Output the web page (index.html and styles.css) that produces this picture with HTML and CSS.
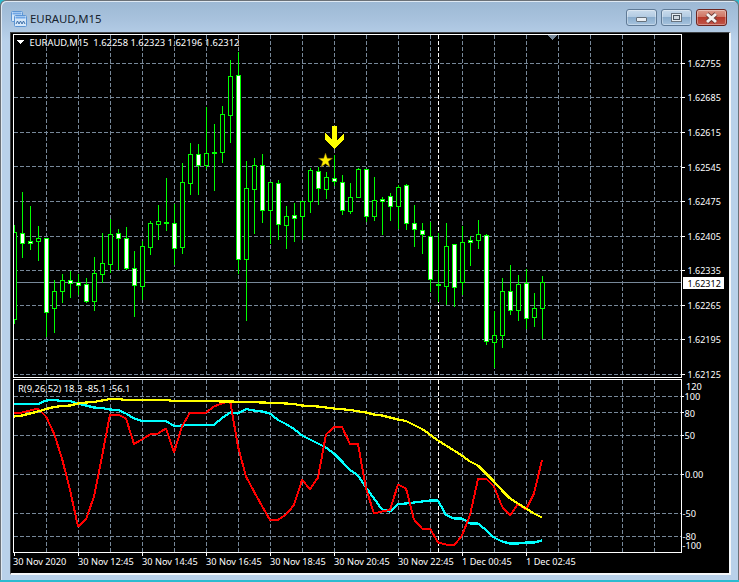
FILE: index.html
```html
<!DOCTYPE html>
<html lang="en">
<head>
<meta charset="utf-8">
<title>EURAUD,M15</title>
<link rel="stylesheet" href="styles.css">
</head>
<body>
<div class="window">
  <header class="titlebar">
    <svg class="app-icon" width="16" height="16" viewBox="0 0 16 16">
      <rect class="icon-back" x="0.5" y="0.5" width="11" height="10" rx="1"/>
      <rect class="icon-head" x="1.5" y="1.5" width="9" height="2"/>
      <rect class="icon-front" x="3.5" y="4.5" width="12" height="11" rx="1"/>
      <rect class="icon-head" x="4.5" y="5.5" width="10" height="2"/>
      <path class="icon-wave" d="M5 13l1.5-3 1.5 3 1.5-3 1.500 3 1.500-3 1.500 3"/>
    </svg>
    <span class="title">EURAUD,M15</span>
    <div class="controls">
      <button class="ctl"><span class="glyph-min"></span></button>
      <button class="ctl"><span class="glyph-max"></span></button>
      <button class="ctl ctl-close">
        <svg width="17" height="12" viewBox="0 0 17 12"><path class="x-under" d="M4 2l9 8M13 2l-9 8"/><path class="x-top" d="M4 2l9 8M13 2l-9 8"/></svg>
      </button>
    </div>
  </header>
  <div class="client">
    <svg class="chart" width="717" height="540" viewBox="11 33 717 540">
      <defs>
        <clipPath id="main-plot"><rect x="14" y="35" width="667" height="342"/></clipPath>
      </defs>
      <g id="grid"></g>
      <rect class="bid" x="14" y="282" width="667" height="1"/>
      <g id="candles" clip-path="url(#main-plot)"></g>

      <rect class="frame" x="13.5" y="34.5" width="668" height="343"/>
      <rect class="frame" x="13.5" y="379.5" width="668" height="173"/>

      <polygon class="shift" points="548,35 557,35 552.5,40"/>
      <polygon class="menu-tri" points="17,40 24,40 20.500,44"/>

      <path class="arrow" d="M332 126h5v14l7-7v6l-9.500 10-9.500-10v-6l7 7z"/>
      <polygon class="star" points="325.500,153 327.300,158.300 332.500,158.300 328.300,161.500 330,167 325.500,163.700 321,167 322.700,161.500 318.500,158.300 323.700,158.300"/>

      <polyline class="ind ind-cyan" points="14,404 22,404 30,404 38,404 46,400.500 54,400 62,401 70,401 78,403.500 86,405.500 94,407.500 102,408 110,409.500 118,410 126,413.500 134,418.500 142,421 150,421 158,421 166,421 174,426 182,425.500 190,425 198,425 206,425 214,425 222,418 230,412.500 238,413.500 246,409 254,410.500 262,411.500 270,413.500 278,420 286,424 294,429 302,435.500 310,439.500 318,443.500 326,447.500 334,453.500 342,461.500 350,470 358,475.500 366,487.500 374,498.500 382,509.500 390,511.500 398,504 406,503.500 414,502.500 422,501.500 430,500.500 438,500.500 446,515 454,518.500 462,518.500 470,523.500 478,523.500 486,530 494,537.500 502,541.500 510,543.500 518,543.500 526,542.500 534,542.500 542,540.500"/>
      <polyline class="ind ind-red" points="14,412.500 22,412.500 30,410.500 38,408.500 46,416.500 54,433.500 62,458.500 70,490 78,526.500 86,519.500 94,496.500 102,456.500 110,414.500 118,414.500 126,418.500 134,444 142,439.500 150,434.500 158,433.500 166,428.500 174,452.500 182,426.500 190,412.500 198,412.500 206,412.500 214,406.500 222,403.500 230,400.500 238,446.500 246,476.500 254,491.500 262,506 270,520 278,520 286,514.500 294,505 302,480 310,489 318,477.500 326,434.500 334,427 342,427 350,444 358,444 366,488.500 374,513.500 382,511.500 390,510 398,484.500 406,488.500 414,519.500 422,528.500 430,528.500 438,542.500 446,544.500 454,545.500 462,535.500 470,515 478,479 486,478.500 494,486.500 502,506.500 510,515.500 518,504 526,509.500 534,493.500 542,460"/>
      <polyline class="ind ind-yellow" points="14,416.500 22,415.500 30,413.500 38,411.500 46,409 54,407 62,406 70,405.500 78,403.500 86,402.500 94,402 102,400.500 110,399 118,399 126,400 134,400 166,400 174,401 230,401.500 262,402.500 278,403 294,404 302,405.500 318,406.500 334,408.500 350,410 366,412.500 374,414.500 382,415.500 390,417.500 398,419.500 406,421 414,425 422,429 430,434.500 438,440.500 446,445.500 454,450.500 462,455.500 470,461.500 478,465.500 486,473.500 494,481.500 502,490.500 510,498.500 518,503.500 526,508.500 534,513.500 542,517.500"/>

      <g class="ticks">
        <path d="M682 63.500h3M682 97.500h3M682 132.500h3M682 167.500h3M682 201.500h3M682 236.500h3M682 270.500h3M682 305.500h3M682 339.500h3M682 374.500h3"/>
        <path d="M682 396.500h2M682 412.500h2M682 435.500h2M682 474.500h2"/>
        <path d="M14.500 553v3M78.500 553v3M142.500 553v3M206.500 553v3M270.500 553v3M334.500 553v3M398.500 553v3M462.500 553v3M526.500 553v3"/>
      </g>

      <rect class="bid-box" x="683" y="277" width="41" height="12"/>
      <text class="lbl lbl-price lbl-bid" x="687.500" y="286.500">1.62312</text>

      <text class="lbl lbl-head" x="29.500" y="45.500" xml:space="preserve">EURAUD,M15  1.62258 1.62323 1.62196 1.62312</text>
      <text class="lbl lbl-head" x="18" y="392">R(9,26,52) 18.3 -85.1 -56.1</text>

      <text class="lbl lbl-price" x="687.500" y="67">1.62755</text>
      <text class="lbl lbl-price" x="687.500" y="101">1.62685</text>
      <text class="lbl lbl-price" x="687.500" y="136">1.62615</text>
      <text class="lbl lbl-price" x="687.500" y="171">1.62545</text>
      <text class="lbl lbl-price" x="687.500" y="205">1.62475</text>
      <text class="lbl lbl-price" x="687.500" y="240">1.62405</text>
      <text class="lbl lbl-price" x="687.500" y="274">1.62335</text>
      <text class="lbl lbl-price" x="687.500" y="309">1.62265</text>
      <text class="lbl lbl-price" x="687.500" y="343">1.62195</text>
      <text class="lbl lbl-price" x="687.500" y="378">1.62125</text>

      <text class="lbl" x="686" y="390">120</text>
      <text class="lbl" x="684.500" y="400">100</text>
      <text class="lbl" x="684.500" y="416.500">80</text>
      <text class="lbl" x="684.500" y="439">50</text>
      <text class="lbl" x="685" y="478">0.00</text>
      <text class="lbl" x="682.500" y="517">-50</text>
      <text class="lbl" x="682.500" y="540">-80</text>
      <text class="lbl" x="682.500" y="549">-100</text>

      <text class="lbl" x="13" y="565">30 Nov 2020</text>
      <text class="lbl" x="78" y="565">30 Nov 12:45</text>
      <text class="lbl" x="142" y="565">30 Nov 14:45</text>
      <text class="lbl" x="206" y="565">30 Nov 16:45</text>
      <text class="lbl" x="270" y="565">30 Nov 18:45</text>
      <text class="lbl" x="334" y="565">30 Nov 20:45</text>
      <text class="lbl" x="398" y="565">30 Nov 22:45</text>
      <text class="lbl" x="462" y="565">1 Dec 00:45</text>
      <text class="lbl" x="526" y="565">1 Dec 02:45</text>
    </svg>
  </div>
</div>
<script src="chart.js"></script>
</body>
</html>
```

FILE: styles.css
```css
* { box-sizing: border-box; }

html, body {
  margin: 0;
  height: 100%;
  overflow: hidden;
}

body {
  background: #2bbbd0;
}

.window {
  width: 739px;
  height: 580px;
  display: flex;
  flex-direction: column;
  padding: 0 7px 6px 9px;
  border: 1px solid #6b7178;
  border-bottom: none;
  border-radius: 6px 6px 0 0;
  background: linear-gradient(#9cb8d4 0, #a9c3de 20px, #b9d1ea 40px);
  box-shadow: inset 1px 1px 0 #dfe9f3;
}

.titlebar {
  height: 31px;
  flex: none;
  display: flex;
  align-items: center;
  gap: 3px;
  padding-left: 1px;
}

.app-icon {
  flex: none;
  margin-top: 5px;
}

.icon-back, .icon-front { fill: #d6e8fa; stroke: #5c95d4; }
.icon-head { fill: #6fa6e6; }
.icon-wave { fill: none; stroke: #3d6fa8; stroke-width: 1; }

.title {
  font: 11.4px "Noto Sans", sans-serif;
  color: #16222e;
  margin-top: 3px;
}

.controls {
  margin-left: auto;
  display: flex;
  gap: 4px;
  margin-top: 2px;
  margin-right: 4px;
}

.ctl {
  width: 31px;
  height: 17px;
  padding: 0;
  display: flex;
  align-items: center;
  justify-content: center;
  border: 1px solid #5f7a96;
  border-radius: 3px;
  background: linear-gradient(#c9dbec 0, #b3cbe2 45%, #8badcd 50%, #a6c3de 100%);
  box-shadow: inset 0 0 0 1px rgba(255, 255, 255, .35);
}

.glyph-min {
  width: 11px;
  height: 5px;
  background: #e9eef3;
  border: 1px solid #66717c;
  border-radius: 1px;
  margin-top: 4px;
}

.glyph-max {
  width: 11px;
  height: 9px;
  background: #cfd8e0;
  border: 1px solid #69747f;
  box-shadow: inset 0 0 0 1px #e8eef3, inset 0 0 0 2px #4a5560;
}

.ctl-close {
  border-color: #6d2620;
  background: linear-gradient(#dc9a8b 0, #cf7565 45%, #b73a2b 50%, #c0564a 100%);
}

.x-under { fill: none; stroke: #6b3a35; stroke-width: 4.5; }
.x-top { fill: none; stroke: #f5f1ef; stroke-width: 3; }

.client {
  flex: 1;
  background: #000;
  border-left: 1px solid #3c3f42;
  border-top: 1px solid #3c3f42;
  border-right: 2px solid #f4f7fa;
  border-bottom: 2px solid #f4f7fa;
}

.chart {
  display: block;
  shape-rendering: crispEdges;
}

.frame {
  fill: none;
  stroke: #fff;
  stroke-width: 1;
}

.bid { fill: #778899; }
.shift { fill: #778899; }
.menu-tri { fill: #fff; }

.grid-line {
  stroke: #778899;
  stroke-width: 1;
  stroke-dasharray: 4 2;
}

.sep-line {
  stroke: #fff;
  stroke-width: 1;
  stroke-dasharray: 4 2;
}

.wick { stroke: #00ff00; stroke-width: 1; }
.body-up { fill: #000; stroke: #00ff00; stroke-width: 1; }
.body-down { fill: #fff; stroke: #00ff00; stroke-width: 1; }

.arrow { fill: #ffff00; }
.star { fill: #ffee00; stroke: #7a5c00; stroke-width: 0.5; shape-rendering: geometricPrecision; }

.ind { fill: none; stroke-width: 2; stroke-linejoin: round; }
.ind-red { stroke: #ff0000; }
.ind-cyan { stroke: #00ffff; stroke-width: 2.2; }
.ind-yellow { stroke: #ffff00; stroke-width: 2.2; }

.ticks path { fill: none; stroke: #fff; stroke-width: 1; }

.bid-box { fill: #fff; }

.lbl {
  font: 9.2px "Noto Sans", sans-serif;
  fill: #fff;
}

.lbl-head { font-size: 9.4px; }
.lbl-price { font-size: 9px; }
.lbl-bid { fill: #000; }
```

FILE: chart.js
```js
// x of the first candle, then [high, bodyTop, bodyBottom, low, filled]
var FIRST_X = 14;
var STEP = 8;
var CANDLES = [
  [225,232,319,324,0],[192,233,243,258,1],[206,241,243,250,1],[226,238,241,261,0],[238,238,312,337,1],
  [280,291,308,333,0],[274,280,291,303,0],[271,280,283,298,1],[274,282,285,295,1],[278,284,301,303,1],
  [257,273,301,311,0],[233,263,274,283,0],[219,234,264,273,0],[229,233,238,270,1],[227,238,268,270,1],
  [251,268,285,317,1],[241,246,286,300,0],[221,223,247,255,0],[205,221,224,240,0],[178,222,223,231,1],
  [204,223,248,265,1],[163,182,247,254,0],[143,154,183,195,0],[144,154,165,195,1],[107,153,165,169,0],
  [124,152,152,191,1],[106,114,152,163,0],[60,76,115,143,0],[52,75,259,274,1],[161,188,259,321,0],
  [158,165,189,234,0],[154,165,210,223,1],[182,182,210,244,0],[180,183,224,240,1],[206,216,225,249,0],
  [203,215,218,242,1],[201,201,216,240,0],[168,170,201,213,0],[167,171,188,205,1],[172,177,189,199,0],
  [155,178,181,186,1],[175,182,210,215,1],[183,197,211,214,0],[168,169,197,198,0],[169,169,216,222,1],
  [177,200,216,221,0],[197,199,201,235,1],[193,196,206,221,1],[185,187,206,229,0],[184,185,223,230,1],
  [205,223,229,247,1],[223,230,234,254,1],[222,236,279,292,1],[233,284,284,302,1],[223,246,286,305,0],
  [244,244,287,307,1],[226,242,282,295,0],[236,240,242,266,1],[220,234,240,249,0],[234,235,341,345,1],
  [311,335,342,368,0],[278,291,335,348,0],[265,291,310,315,1],[275,284,310,321,0],[269,283,318,329,1],
  [293,308,317,327,0],[276,282,308,339,0]
];

var NS = "http://www.w3.org/2000/svg";

function el(parent, name, attrs) {
  var node = document.createElementNS(NS, name);
  Object.keys(attrs).forEach(function (key) {
    node.setAttribute(key, attrs[key]);
  });
  parent.appendChild(node);
  return node;
}

function line(parent, cls, x1, y1, x2, y2) {
  el(parent, "line", { "class": cls, x1: x1, y1: y1, x2: x2, y2: y2 });
}

var grid = document.getElementById("grid");

[63, 97, 132, 166, 201, 236, 270, 305, 339, 374].forEach(function (y) {
  line(grid, "grid-line", 14, y + 0.5, 681, y + 0.5);
});
[396, 412, 435, 474, 513, 536].forEach(function (y) {
  line(grid, "grid-line", 14, y + 0.5, 681, y + 0.5);
});
for (var gx = 46; gx <= 654; gx += 32) {
  line(grid, "grid-line", gx + 0.5, 35, gx + 0.5, 377);
  line(grid, "grid-line", gx + 0.5, 380, gx + 0.5, 552);
}
line(grid, "sep-line", 438.5, 35, 438.5, 377);
line(grid, "sep-line", 438.5, 380, 438.5, 552);

var layer = document.getElementById("candles");

CANDLES.forEach(function (c, i) {
  var x = FIRST_X + i * STEP;
  line(layer, "wick", x + 0.5, c[0], x + 0.5, c[3]);
  el(layer, "rect", {
    "class": c[4] ? "body-down" : "body-up",
    x: x - 1.5,
    y: c[1] + 0.5,
    width: 4,
    height: Math.max(c[2] - c[1], 1)
  });
});
```
